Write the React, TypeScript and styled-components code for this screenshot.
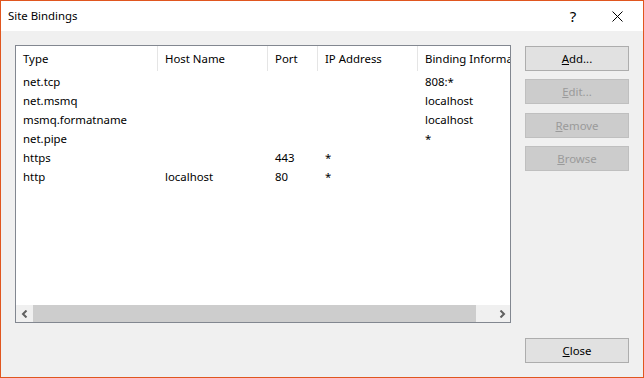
import React from "react";
import styled, { createGlobalStyle } from "styled-components";

const Global = createGlobalStyle`
  html, body {
    margin: 0;
    padding: 0;
    background: #ffffff;
  }
  * {
    box-sizing: border-box;
  }
`;

const Window = styled.div`
  width: 644px;
  height: 378px;
  border: 1px solid #e0561f;
  display: flex;
  flex-direction: column;
  font-family: "Noto Sans", "Segoe UI", sans-serif;
  font-size: 11.4px;
  color: #000;
  background: #f0f0f0;
`;

const TitleBar = styled.div`
  height: 30px;
  background: #fff;
  display: flex;
  align-items: center;
  padding-left: 7px;
  flex-shrink: 0;
`;

const Title = styled.div`
  flex: 1;
  padding-bottom: 2px;
`;

const TitleButton = styled.div`
  width: 44px;
  height: 30px;
  display: flex;
  align-items: center;
  justify-content: center;
  font-size: 15px;
`;

const Body = styled.div`
  flex: 1;
  display: flex;
  padding: 14px 14px 14px 14px;
  gap: 14px;
`;

const ListBox = styled.div`
  width: 496px;
  height: 278px;
  border: 1px solid #828790;
  background: #fff;
  display: flex;
  flex-direction: column;
  overflow: hidden;
`;

const Grid = styled.div`
  flex: 1;
  overflow: hidden;
`;

const Row = styled.div<{ $header?: boolean }>`
  display: grid;
  grid-template-columns: 142px 110px 50px 100px 200px;
  height: ${(p) => (p.$header ? "25px" : "19px")};
  align-items: center;
  margin-bottom: ${(p) => (p.$header ? "1px" : "0")};
  white-space: nowrap;
`;

const Cell = styled.div<{ $header?: boolean }>`
  padding-left: 7px;
  height: 100%;
  display: flex;
  align-items: center;
  padding-bottom: 1px;
  overflow: hidden;
  border-right: ${(p) => (p.$header ? "1px solid #e5e5e5" : "none")};
  &:last-child {
    border-right: none;
  }
`;

const HScroll = styled.div`
  height: 17px;
  display: flex;
  flex-shrink: 0;
  background: #f0f0f0;
`;

const Arrow = styled.div`
  width: 17px;
  height: 17px;
  display: flex;
  align-items: center;
  justify-content: center;
`;

const Track = styled.div`
  flex: 1;
  display: flex;
  padding-right: 17px;
`;

const Thumb = styled.div`
  flex: 1;
  background: #cdcdcd;
`;

const Side = styled.div`
  width: 104px;
  display: flex;
  flex-direction: column;
  padding-top: 1px;
`;

const Button = styled.div<{ $disabled?: boolean; $gap?: number }>`
  height: 25px;
  margin-bottom: ${(p) => p.$gap ?? 0}px;
  display: flex;
  align-items: center;
  justify-content: center;
  padding-bottom: 1px;
  background: ${(p) => (p.$disabled ? "#cccccc" : "#e1e1e1")};
  border: 1px solid ${(p) => (p.$disabled ? "#bfbfbf" : "#adadad")};
  color: ${(p) => (p.$disabled ? "#9a9a9a" : "#000")};
`;

const Spacer = styled.div`
  flex: 1;
`;

const headers = ["Type", "Host Name", "Port", "IP Address", "Binding Informa"];

const rows = [
  ["net.tcp", "", "", "", "808:*"],
  ["net.msmq", "", "", "", "localhost"],
  ["msmq.formatname", "", "", "", "localhost"],
  ["net.pipe", "", "", "", "*"],
  ["https", "", "443", "*", ""],
  ["http", "localhost", "80", "*", ""],
];

const Chevron = ({ dir }: { dir: "left" | "right" }) => (
  <svg width="8" height="8" viewBox="0 0 8 8">
    <path
      d={dir === "left" ? "M5.5 0.5 L2 4 L5.5 7.5" : "M2.5 0.5 L6 4 L2.5 7.5"}
      fill="none"
      stroke="#606060"
      strokeWidth="2"
    />
  </svg>
);

function App() {
  return (
    <>
      <Global />
      <Window>
        <TitleBar>
          <Title>Site Bindings</Title>
          <TitleButton>?</TitleButton>
          <TitleButton style={{ marginRight: 4 }}>
            <svg width="11" height="11" viewBox="0 0 11 11">
              <path d="M0.5 0.5 L10.5 10.5 M10.5 0.5 L0.5 10.5" stroke="#000" strokeWidth="1" />
            </svg>
          </TitleButton>
        </TitleBar>
        <Body>
          <ListBox>
            <Grid>
              <Row $header>
                {headers.map((h) => (
                  <Cell $header key={h}>
                    {h}
                  </Cell>
                ))}
              </Row>
              {rows.map((r, i) => (
                <Row key={i}>
                  {r.map((c, j) => (
                    <Cell key={j}>{c}</Cell>
                  ))}
                </Row>
              ))}
            </Grid>
            <HScroll>
              <Arrow>
                <Chevron dir="left" />
              </Arrow>
              <Track>
                <Thumb />
              </Track>
              <Arrow>
                <Chevron dir="right" />
              </Arrow>
            </HScroll>
          </ListBox>
          <Side>
            <Button $gap={8}>
              <u>A</u>dd...
            </Button>
            <Button $disabled $gap={9}>
              <u>E</u>dit...
            </Button>
            <Button $disabled $gap={8}>
              <u>R</u>emove
            </Button>
            <Button $disabled>
              <u>B</u>rowse
            </Button>
            <Spacer />
            <Button>
              <u>C</u>lose
            </Button>
          </Side>
        </Body>
      </Window>
    </>
  );
}

export default App;
